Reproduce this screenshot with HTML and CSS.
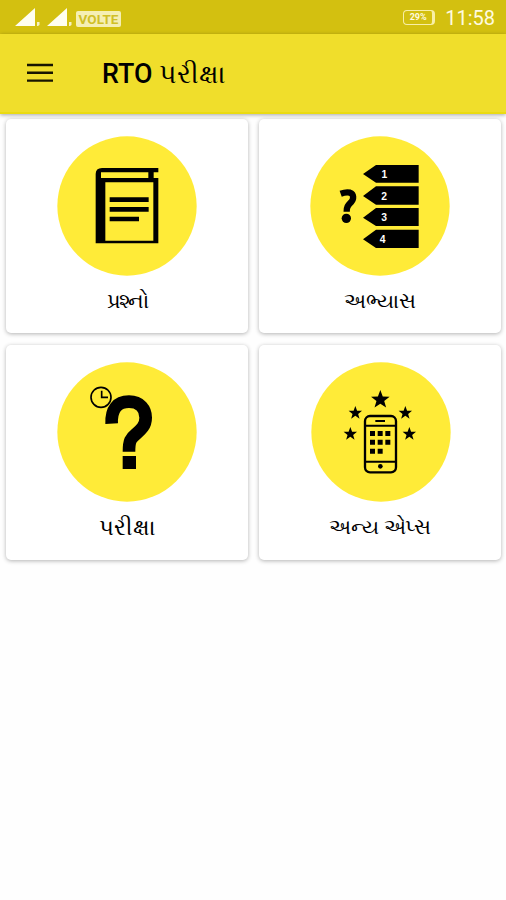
FILE: index.html
```html
<!DOCTYPE html>
<html lang="gu">
<head>
<meta charset="utf-8">
<title>RTO પરીક્ષા</title>
<link rel="stylesheet" href="styles.css">
</head>
<body>
<div class="status">
  <svg class="signal" width="60" height="20" viewBox="0 0 60 20"><path d="M0 18L20 0V18ZM32 18L52 0V18Z"/><path d="M22 14h2.500v3l-1.500 1h-1zM54 14h2.500v3l-1.500 1h-1z" opacity=".8"/></svg>
  <span class="volte">VOLTE</span>
  <div class="battery"><span>29%</span></div>
  <time>11:58</time>
</div>
<header class="bar">
  <svg class="menu" width="26" height="20" viewBox="0 0 26 20"><path d="M0 2h26M0 9.800h26M0 17.600h26"/></svg>
  <h1>RTO પરીક્ષા</h1>
</header>
<main class="grid">
  <section class="card">
    <svg class="icon" viewBox="171 78 420 420">
      <circle class="disc" cx="381" cy="288" r="209"/>
      <path fill-rule="evenodd" d="M287 400V192Q287 174 306 174H475V187H461V204H475V400ZM303 187V204H445V187ZM316 217V392H460V217Z"/>
      <path d="M329 262h117v14H329zM329 291h117v14H329zM329 320h88v14h-88z"/>
    </svg>
    <h2 class="questions">પ્રશ્નો</h2>
  </section>
  <section class="card">
    <svg class="icon" viewBox="171 78 420 420">
      <circle class="disc" cx="381" cy="288" r="209"/>
      <path d="M330 192L369 165H497V218H369ZM330 258L369 229H497V284H369ZM330 323L369 294H497V348H369ZM330 388L369 359H497V414H369Z"/>
      <path class="line" stroke-width="19" d="M263 251C274 247 284 246 291 248C303 252 303 267 294 277C284 287 281 291 281 305"/>
      <circle cx="280" cy="325" r="14"/>
      <g class="num"><text x="394" y="203">1</text><text x="393" y="269">2</text><text x="393" y="334">3</text><text x="389" y="398">4</text></g>
    </svg>
    <h2 class="practice">અભ્યાસ</h2>
  </section>
  <section class="card">
    <svg class="icon" viewBox="171 66 420 420">
      <circle class="disc" cx="381" cy="276" r="209"/>
      <circle class="line" cx="303" cy="172" r="30" stroke-width="5"/>
      <path class="line" stroke-width="5" d="M305 152V172H324"/>
      <path class="line" stroke-width="38" d="M335 251C333 208 351 185 387 185C421 185 437 208 437 233C437 258 422 270 408 282C392 295 387 302 387 335"/>
      <path d="M368 348h40v39h-40z"/>
    </svg>
    <h2 class="exam">પરીક્ષા</h2>
  </section>
  <section class="card">
    <svg class="icon shifted" viewBox="174 66 420 420">
      <defs><path id="star" d="M0-10L2.500-3.300L9.600-3.100L4 1.300L6 8.100L0 4.100L-6 8.100L-4 1.300L-9.600-3.100L-2.500-3.300Z"/></defs>
      <circle class="disc" cx="384" cy="276" r="209"/>
      <use href="#star" transform="translate(382 179) scale(2.900)"/>
      <use href="#star" transform="translate(307 219) scale(2.100)"/>
      <use href="#star" transform="translate(457 219) scale(2.100)"/>
      <use href="#star" transform="translate(292 282) scale(2.100)"/>
      <use href="#star" transform="translate(469 282) scale(2.100)"/>
      <rect class="line" x="336" y="228" width="93" height="169" rx="15" stroke-width="7"/>
      <path class="line" stroke-width="6" d="M336 257H429M336 365H429M367 243H396"/>
      <circle cx="382" cy="379" r="7"/>
      <path d="M351 273h15v15h-15zM374 273h15v15h-15zM397 273h15v15h-15zM351 299h15v15h-15zM374 299h15v15h-15zM397 299h15v15h-15zM351 326h15v15h-15zM374 326h15v15h-15z"/>
    </svg>
    <h2 class="apps">અન્ય એપ્સ</h2>
  </section>
</main>
</body>
</html>
```
FILE: styles.css
```css
* { box-sizing: border-box; }
body {
  margin: 0;
  height: 900px;
  overflow: hidden;
  background: #fefefe;
  color: #000;
  font-family: Roboto, "Noto Sans", sans-serif;
}
.status {
  display: flex;
  align-items: center;
  height: 34px;
  padding: 2px 11px 0 15px;
  background: #d3c010;
  color: #fffbe0;
}
.signal { fill: #fffef0; }
.volte {
  width: 45px;
  height: 16px;
  margin: 1px auto 0 1px;
  border-radius: 2px;
  background: #f5efb4;
  color: #d0bf27;
  font: bold 13.500px/17px Roboto, sans-serif;
  text-align: center;
}
.battery {
  width: 32px;
  height: 15px;
  margin: -1px 10px 0 0;
  border: 1.500px solid #f8efa6;
  border-right-width: 3px;
  border-radius: 4px;
  font: bold 9px/13px Roboto, sans-serif;
  text-align: center;
}
time { font-size: 20px; line-height: 32px; }
.bar {
  position: relative;
  display: flex;
  align-items: center;
  height: 80px;
  padding: 0 27px;
  background: #f0de2b;
  border-bottom: 2px solid #eadb12;
  box-shadow: 0 1px 4px rgba(0, 0, 0, .35);
}
.menu { stroke: #171500; stroke-width: 2.400; }
h1 {
  margin: 2px 0 0 49px;
  font-size: 26.800px;
  font-weight: 500;
  line-height: 40px;
  white-space: nowrap;
}
.grid {
  display: grid;
  grid-template-columns: 242px 242px;
  grid-template-rows: 214px 215px;
  gap: 12px 11px;
  padding: 5px 6px;
}
.card {
  display: flex;
  flex-direction: column;
  align-items: center;
  padding-top: 17px;
  border-radius: 5px;
  background: #fff;
  box-shadow: 0 1px 4px rgba(0, 0, 0, .3);
}
.icon { width: 140px; height: 140px; flex: none; }
.shifted { margin-left: 2px; }
.disc { fill: #ffeb38; }
.line { fill: none; stroke: #000; }
.num {
  fill: #fff;
  font: bold 31px "Liberation Sans", sans-serif;
  text-anchor: middle;
}
h2 {
  margin: 8px 0 0;
  font-size: 22px;
  font-weight: 400;
  line-height: 34px;
  white-space: nowrap;
}
.questions { font-size: 21px; letter-spacing: -1.500px; }
.practice { font-size: 21px; }
.exam { font-size: 23.300px; }
.apps { font-size: 21px; letter-spacing: -.200px; }
```
